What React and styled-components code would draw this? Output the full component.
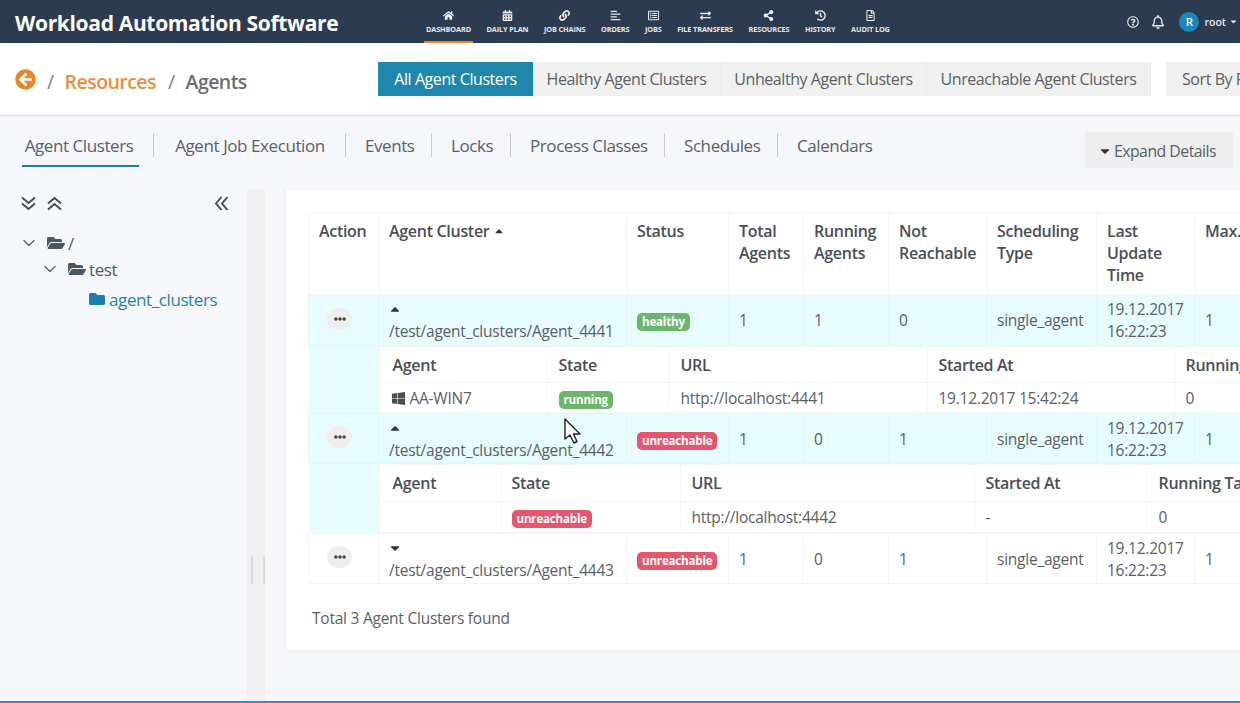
import React from "react";
import styled, { createGlobalStyle } from "styled-components";
import { ChevronDown } from "lucide-react";
import {
  FaHome, FaCalendarAlt, FaLink, FaAlignLeft, FaRegListAlt, FaExchangeAlt, FaShareAlt, FaHistory, FaRegFileAlt,
  FaRegQuestionCircle, FaRegBell, FaCaretDown, FaCaretUp, FaArrowCircleLeft, FaWindows, FaFolderOpen, FaFolder,
  FaEllipsisH, FaSortUp,
} from "react-icons/fa";

const Global = createGlobalStyle`
  html, body { margin: 0; padding: 0; height: 100%; overflow: hidden; background: #f5f7fb; }
  * { box-sizing: border-box; }
  body { font-family: "Open Sans", "Noto Sans", sans-serif; color: #5a5f66; }
`;

const Page = styled.div`
  width: 1240px; height: 703px; overflow: hidden; display: flex; flex-direction: column;
  border-bottom: 2px solid #2f8fd0; background: #f5f7fb;
`;
const TopBar = styled.header`
  height: 43px; flex: none; background: #2c3b4f; display: flex; align-items: stretch; color: #fff;
`;
const Brand = styled.div`
  width: 424px; flex: none; padding-left: 15px; font-family: "Open Sans", sans-serif; font-weight: 700;
  font-size: 21px; line-height: 46px; letter-spacing: -0.33px; white-space: nowrap;
`;
const Nav = styled.nav`
  display: flex; gap: 11.6px; height: 43px;
`;
const NavItem = styled.div`
  display: flex; flex-direction: column; align-items: center; padding: 10px 2px 0; height: 43px;
  border-bottom: 2px solid ${p => (p.$active ? "#e08a2b" : "transparent")};
  font-family: "Open Sans", sans-serif; font-size: 7.3px; font-weight: 700; letter-spacing: -0.12px; line-height: 10px; white-space: nowrap; color: #e4e9ee;
  svg { font-size: 11px; margin-bottom: 3px; color: #e8ecef; }
`;
const UserArea = styled.div`
  margin-left: auto; display: flex; align-items: center; padding: 0 2px 0 0; height: 43px; font-size: 10.5px; font-weight: 600; color: #e8ecef;
  svg { flex: none; }
`;
const Avatar = styled.span`
  width: 20px; height: 20px; border-radius: 50%; background: #1c86bd; color: #fff; display: flex; align-items: center;
  justify-content: center; font-size: 11.5px; font-weight: 600; margin: 0 5px 0 14px;
`;
const HelpIcon = styled(FaRegQuestionCircle)`
  font-size: 12px; margin-right: 12px;
`;
const BellIcon = styled(FaRegBell)`
  font-size: 14px;
`;
const UserCaret = styled(FaCaretDown)`
  font-size: 9px; margin-left: 3px;
`;
const CrumbBar = styled.div`
  height: 72px; flex: none; background: #fff; display: flex; align-items: flex-start; border-bottom: 1px solid #e8e8ec;
  box-shadow: 0 1px 3px rgba(0,0,0,.08); position: relative; overflow: hidden;
`;
const Crumbs = styled.div`
  width: 378px; flex: none; padding: 26px 0 0 15px; display: flex; align-items: center; font-size: 19.5px; line-height: 26px; letter-spacing: -0.55px;
  font-weight: 600; color: #6a6d72;
  svg { color: #e8852b; font-size: 21px; margin-right: 11px; margin-top: -6px; flex: none; }
`;
const Slash = styled.span`
  color: #7b7f85; font-weight: 400; margin: 0 11px 0 0;
`;
const Link = styled.span`
  color: #e98f3e; margin-right: 12px;
`;
const BtnGroup = styled.div`
  display: flex; margin-top: 19px;
`;
const FilterBtn = styled.div`
  height: 34px; width: ${p => p.$w}px; text-align: center; line-height: 34px; font-size: 16px; letter-spacing: -0.43px; white-space: nowrap; flex: none;
  background: ${p => (p.$active ? "#1f87ab" : "#f0f0f0")}; color: ${p => (p.$active ? "#fff" : "#5d5f63")};
  border-right: ${p => (p.$active ? "0" : "1px solid #ebebeb")};
`;
const SortBtn = styled(FilterBtn)`
  margin: 19px 0 0 15px; border: 0; text-align: left; padding-left: 16px;
`;
const TabBar = styled.div`
  height: 75px; flex: none; display: flex; align-items: flex-start; padding: 15px 7px 0 22px; position: relative;
`;
const Tabs = styled.div`
  display: flex; align-items: flex-start;
`;
const Tab = styled.div`
  font-size: 17px; letter-spacing: -0.42px; line-height: 22px; height: 37px; padding: 5px ${p => (p.$active ? "3px" : "0")} 0 0; white-space: nowrap; color: #5b6068; text-align: center;
  border-bottom: ${p => (p.$active ? "2px solid #1a7ea6" : "0")}; width: ${p => p.$w}px;
  margin-right: ${p => (p.$active ? "-4px" : "0")};
`;
const TabSep = styled.span`
  width: 1px; height: 24px; background: #c9c9cc; margin: 3px 19px 0 18px; flex: none;
`;
const ExpandBtn = styled.div`
  margin-left: auto; margin-top: 2px; height: 36px; width: 148px; padding: 1px 4px 0 0; background: #eeeeee; display: flex; align-items: center; justify-content: center;
  font-size: 15.8px; letter-spacing: -0.5px; color: #5c6068; white-space: nowrap;
  svg { font-size: 14px; margin-right: 2px; color: #333; }
`;
const Body = styled.div`
  flex: 1; display: flex; min-height: 0;
`;
const Sidebar = styled.aside`
  width: 247px; flex: none; padding: 4px 0 0 20px; color: #4c5258;
`;
const TreeTools = styled.div`
  display: flex; align-items: center; width: 210px; gap: 9px; height: 18px; margin-bottom: 20px; color: #454b52;
  svg:last-child { margin-left: auto; }
`;
const TreeTool = styled.svg`
  width: 17px; height: 17px; flex: none; fill: none; stroke: currentColor; stroke-width: 1.9;
  transform: rotate(${p => p.$deg}deg);
`;
const TreeRow = styled.div`
  display: flex; align-items: center; height: ${p => p.$h}px; margin-left: ${p => p.$indent}px; font-size: 17px; letter-spacing: -0.4px;
  color: ${p => (p.$active ? "#1f83a8" : "#52575d")};
`;
const Chevron = styled(ChevronDown)`
  width: 20px; height: 20px; color: #646a70; margin-right: 8px; flex: none; stroke-width: 1.7;
`;
const OpenFolder = styled(FaFolderOpen)`
  font-size: 18px; color: #4c5763; margin-right: 3px; flex: none;
`;
const BlueFolder = styled(FaFolder)`
  font-size: 16px; color: #1a80ab; margin-right: 4px; margin-left: 1px; flex: none;
`;
const Splitter = styled.div`
  width: 18px; flex: none; background: #f0f0f0; position: relative;
  &::after {
    content: ""; position: absolute; left: 4px; top: 366px; width: 10px; height: 28px;
    border-left: 2px solid #dcdcdc; border-right: 2px solid #dcdcdc;
  }
`;
const Content = styled.main`
  flex: 1; min-width: 0; padding-left: 21px; overflow: hidden;
`;
const Card = styled.section`
  width: 1000px; height: 460px; background: #fff; padding: 22px 0 0 22px; box-shadow: 0 0 3px rgba(0,0,0,.08);
`;
const Table = styled.table`
  border-collapse: collapse; table-layout: fixed; width: ${p => p.$w}px;
  font-size: 15.5px; letter-spacing: -0.24px; color: #5b6066;
`;
const Th = styled.th`
  text-align: left; vertical-align: top; font-weight: 600; font-size: 16px; letter-spacing: -0.3px; padding: 7px 10px 8px; line-height: 22px; border: 1px solid #f3f4f6; color: #4a4f55;
`;
const Row = styled.tr`
  background: ${p => (p.$mint ? "#e7fcfd" : "#fff")};
`;
const Td = styled.td`
  padding: 0 10px; height: ${p => p.$h}px; border: 1px solid ${p => (p.$mint ? "#e1f7f8" : "#f3f4f6")}; white-space: nowrap; line-height: 22px;
`;
const PathCell = styled(Td)`
  vertical-align: top; padding-top: 9px;
  svg { display: block; font-size: 14px; color: #333; height: 14px; margin: -2px 0 4px -1px; }
`;
const TimeCell = styled(Td)`
  white-space: normal; line-height: 22px;
`;
const NestTd = styled.td`
  padding: 0; height: ${p => p.$h}px; background: #fff; vertical-align: top;
`;
const Spacer = styled.td`
  background: #e7fcfd; padding: 0;
`;
const SubTh = styled.th`
  text-align: left; font-weight: 600; font-size: 16px; letter-spacing: -0.3px; padding: 0 11px; height: ${p => p.$h}px; border: 1px solid #f5f5f7; color: #4a4f55; white-space: nowrap; overflow: hidden;
  &:first-child { padding-left: 13px; }
`;
const SubTd = styled.td`
  padding: 0 11px; height: ${p => p.$h}px; border: 1px solid #f5f5f7; white-space: nowrap; overflow: hidden;
  &:first-child { padding-left: 13px; }
`;
const WinIcon = styled(FaWindows)`
  font-size: 15px; color: #4a4f55; vertical-align: -2px; margin: 0 4px 0 -2px;
`;
const Badge = styled.span`
  display: inline-block; padding: 0 5px; height: 18px; line-height: 18px; border-radius: 5px; font-size: 11.6px; font-weight: 700; letter-spacing: -0.2px; color: #fff;
  background: ${p => (p.$kind === "bad" ? "#e5566f" : "#6cb56c")};
`;
const MoreBtn = styled.span`
  width: 25px; height: 22px; margin: -3px 0 0 8px; border-radius: 50%; background: #eeeeee; color: #444; display: flex; align-items: center; justify-content: center;
  svg { font-size: 12px; }
`;
const SortCaret = styled(FaSortUp)`
  font-size: 12px; margin-left: 4px; vertical-align: -3px; color: #333;
`;
const Footer = styled.div`
  margin: 23px 0 0 4px; font-size: 15.5px; letter-spacing: -0.24px; line-height: 22px; color: #5b6066;
`;
const Cursor = styled.svg`
  position: absolute; left: 563px; top: 418px; width: 19px; height: 27px;
`;

const navItems = [
  [FaHome, "DASHBOARD", true], [FaCalendarAlt, "DAILY PLAN"], [FaLink, "JOB CHAINS"], [FaAlignLeft, "ORDERS"], [FaRegListAlt, "JOBS"],
  [FaExchangeAlt, "FILE TRANSFERS"], [FaShareAlt, "RESOURCES"], [FaHistory, "HISTORY"], [FaRegFileAlt, "AUDIT LOG"],
];
const tabs = [["Agent Clusters", 117], ["Agent Job Execution", 154], ["Events", 48], ["Locks", 41], ["Process Classes", 116], ["Schedules", 75], ["Calendars", 74]];
const cols = [70, 248, 102, 75, 85, 98, 110, 98, 120];
const heads = ["Action", "Agent Cluster", "Status", "Total Agents", "Running Agents", "Not Reachable", "Scheduling Type", "Last Update Time", "Max. Process"];

function DoubleChevron({ deg }) {
  return (
    <TreeTool viewBox="0 0 17 17" $deg={deg}>
      <path d="M2 2.5 L8.5 8 L15 2.5" />
      <path d="M2 8.5 L8.5 14 L15 8.5" />
    </TreeTool>
  );
}

function ClusterRow({ mint, path, status, kind, counts, down, h }) {
  return (
    <Row $mint={mint}>
      <Td $h={h} $mint={mint}><MoreBtn><FaEllipsisH /></MoreBtn></Td>
      <PathCell $h={h} $mint={mint}>{down ? <FaCaretDown /> : <FaCaretUp />}{path}</PathCell>
      <Td $h={h} $mint={mint}><Badge $kind={kind}>{status}</Badge></Td>
      {counts.map((c, i) => <Td $h={h} $mint={mint} key={i}>{c}</Td>)}
      <Td $h={h} $mint={mint}>single_agent</Td>
      <TimeCell $h={h} $mint={mint}>19.12.2017 16:22:23</TimeCell>
      <Td $h={h} $mint={mint}>1</Td>
    </Row>
  );
}

function Nested({ h, widths, heads: hs, cells, headH, lastH }) {
  return (
    <tr>
      <Spacer />
      <NestTd $h={h} colSpan={8}>
        <Table $w={widths.reduce((a, b) => a + b, 0)}>
          <colgroup>{widths.map((w, i) => <col key={i} width={w} />)}</colgroup>
          <thead><tr>{hs.map(t => <SubTh key={t} $h={headH}>{t}</SubTh>)}</tr></thead>
          <tbody><tr>{cells.map((c, i) => <SubTd key={i} $h={lastH}>{c}</SubTd>)}</tr></tbody>
        </Table>
      </NestTd>
    </tr>
  );
}

export default function App() {
  return (
    <Page>
      <Global />
      <TopBar>
        <Brand>Workload Automation Software</Brand>
        <Nav>
          {navItems.map(([I, t, a]) => <NavItem key={t} $active={a}><I />{t}</NavItem>)}
        </Nav>
        <UserArea>
          <HelpIcon />
          <BellIcon />
          <Avatar>R</Avatar>root<UserCaret />
        </UserArea>
      </TopBar>
      <CrumbBar>
        <Crumbs>
          <FaArrowCircleLeft />
          <Slash>/</Slash><Link>Resources</Link><Slash>/</Slash>Agents
        </Crumbs>
        <BtnGroup>
          <FilterBtn $active $w={155}>All Agent Clusters</FilterBtn>
          <FilterBtn $w={188}>Healthy Agent Clusters</FilterBtn>
          <FilterBtn $w={206}>Unhealthy Agent Clusters</FilterBtn>
          <FilterBtn $w={224}>Unreachable Agent Clusters</FilterBtn>
        </BtnGroup>
        <SortBtn $w={140}>Sort By Resource</SortBtn>
      </CrumbBar>
      <TabBar>
        <Tabs>
          {tabs.map(([t, w], i) => (
            <React.Fragment key={t}>
              {i > 0 && <TabSep />}
              <Tab $active={i === 0} $w={w}>{t}</Tab>
            </React.Fragment>
          ))}
        </Tabs>
        <ExpandBtn><FaCaretDown />Expand Details</ExpandBtn>
      </TabBar>
      <Body>
        <Sidebar>
          <TreeTools><DoubleChevron deg={0} /><DoubleChevron deg={180} /><DoubleChevron deg={90} /></TreeTools>
          <TreeRow $h={22} $indent={-1}><Chevron /><OpenFolder />/</TreeRow>
          <TreeRow $h={30} $indent={20}><Chevron /><OpenFolder />test</TreeRow>
          <TreeRow $h={30} $indent={68} $active><BlueFolder />agent_clusters</TreeRow>
        </Sidebar>
        <Splitter />
        <Content>
          <Card>
            <Table $w={1006}>
              <colgroup>{cols.map((w, i) => <col key={i} width={w} />)}</colgroup>
              <thead>
                <tr>
                  {heads.map((h, i) => (
                    <Th key={h}>{h}{i === 1 && <SortCaret />}</Th>
                  ))}
                </tr>
              </thead>
              <tbody>
                <ClusterRow h={51} mint path="/test/agent_clusters/Agent_4441" status="healthy" kind="ok" counts={[1, 1, 0]} />
                <Nested h={67} headH={36} lastH={30}
                  widths={[168, 122, 258, 247, 200]}
                  heads={["Agent", "State", "URL", "Started At", "Running Tasks"]}
                  cells={[<><WinIcon />AA-WIN7</>, <Badge $kind="ok">running</Badge>, "http://localhost:4441", "19.12.2017 15:42:24", "0"]} />
                <ClusterRow h={50} mint path="/test/agent_clusters/Agent_4442" status="unreachable" kind="bad" counts={[1, 0, 1]} />
                <Nested h={69} headH={37} lastH={31}
                  widths={[121, 180, 294, 173, 200]}
                  heads={["Agent", "State", "URL", "Started At", "Running Tasks"]}
                  cells={["", <Badge $kind="bad">unreachable</Badge>, "http://localhost:4442", "-", "0"]} />
                <ClusterRow h={50} down path="/test/agent_clusters/Agent_4443" status="unreachable" kind="bad" counts={[1, 0, 1]} />
              </tbody>
            </Table>
            <Footer>Total 3 Agent Clusters found</Footer>
          </Card>
        </Content>
      </Body>
      <Cursor viewBox="0 0 19 27">
        <path d="M2 1 L2 21 L7 17 L11 25 L14 23.5 L10.5 16 L17 16 Z" fill="#fff" stroke="#222" strokeWidth="1.4" strokeLinejoin="round" />
      </Cursor>
    </Page>
  );
}
